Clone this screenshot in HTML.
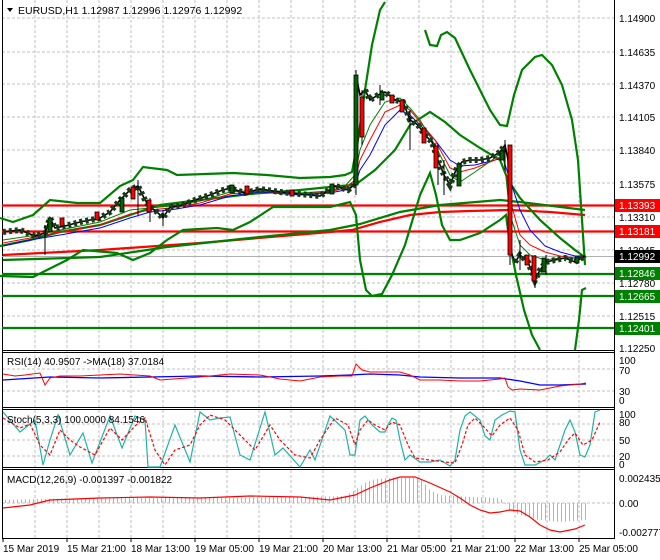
<!DOCTYPE html>
<html><head><meta charset="utf-8"><style>
html,body{margin:0;padding:0;background:#fff}
svg{display:block;font-family:"Liberation Sans",sans-serif;font-size:10px}
</style></head><body>
<svg width="660" height="560" viewBox="0 0 660 560" xmlns="http://www.w3.org/2000/svg">
<defs>
<pattern id="hist" width="4" height="10" patternUnits="userSpaceOnUse"><rect x="1" y="0" width="1" height="10" fill="#b4b4b4"/></pattern>
</defs>
<rect width="660" height="560" fill="#fff"/>
<g stroke="#c0c0c0" stroke-dasharray="3,2" stroke-width="1">
<path d="M35 0V538M67 0V538M99 0V538M131 0V538M163 0V538M195 0V538M227 0V538M259 0V538M291 0V538M323 0V538M355 0V538M387 0V538M419 0V538M451 0V538M483 0V538M515 0V538M547 0V538M579 0V538"/>
<path d="M2 18H614M2 52H614M2 84H614M2 117H614M2 150H614M2 183H614M2 217H614M2 250H614M2 283H614M2 316H614"/>
<path d="M2 369H614M2 391H614M2 424H614M2 440H614M2 456H614M2 503H614"/>
</g>
<g stroke="#000" stroke-width="1" fill="none">
<path d="M2.5 0V538.5H614.5V0"/>
<path d="M2 350.5H614M2 352.5H614M2 407.5H614M2 409.5H614M2 467.5H614M2 469.5H614"/>
</g>
<path d="M2 256.5H614" stroke="#b0b0b0"/>
<g stroke-width="2.2">
<path d="M2 205.5H614" stroke="#ff0000"/>
<path d="M2 231.5H614" stroke="#ff0000"/>
<path d="M2 274H614" stroke="#008000"/>
<path d="M2 296H614" stroke="#008000"/>
<path d="M2 328H614" stroke="#008000"/>
</g>
<polyline fill="none" stroke="#ff0000" stroke-width="2.2" points="3,255 100,250 200,243 330,232 352,230 380,222 410,215 440,212 470,211 510,210 550,212 585,215"/>
<polyline fill="none" stroke="#008000" stroke-width="2.2" points="3,260 100,257 167,247 250,238 330,230 360,224 400,212 440,205 500,200 520,202 585,210"/>
<g fill="none" stroke="#008000" stroke-width="2.2">
<polyline points="0,218 13,222 33,215 50,200 77,203 100,203 120,186 133,180 143,167 167,170 177,175 233,173 267,175 300,178 330,177 345,175 352,172 358,140 365,90 372,45 380,10 385,2"/>
<polyline points="425,30 430,45 437,46 441,35 447,32 455,38 470,70 490,110 500,125 507,126 514,95 522,70 535,57 542,55 552,65 562,85 572,120 578,160 582,220 585,265"/>
<polyline points="0,276 33,277 67,260 83,250 117,253 133,260 150,253 167,240 183,230 217,228 233,230 250,222 273,207 330,207 350,202 356,215 360,260 366,290 372,296 382,294 392,275 405,245 420,195 430,173 436,195 442,225 450,240 460,240 480,233 500,220 506,215 510,245 516,275 524,310 532,335 540,350"/>
<polyline points="575,350 579,320 582,290 586,288"/>
<polyline points="0,246 30,240 60,232 100,225 130,215 160,205 200,200 250,194 300,190 340,186 355,185 375,170 395,150 410,125 430,112 445,122 460,135 480,148 500,160 508,180 520,198 540,220 560,238 575,250 586,258"/>
</g>
<polyline fill="none" stroke="#0000ff" stroke-width="1" points="3,246 30,240 60,235 100,228 130,218 150,212 170,210 200,205 230,196 260,192 300,195 330,193 345,190 355,185 360,170 370,155 385,125 400,110 410,115 420,125 435,140 450,160 460,166 475,165 495,160 503,158 510,180 520,210 530,230 545,246 560,252 575,256 586,256"/>
<polyline fill="none" stroke="#ff0000" stroke-width="1" points="3,243 30,238 60,232 100,225 130,214 150,210 170,208 200,203 230,194 260,191 300,194 330,192 345,188 355,180 360,160 370,140 385,112 400,105 410,110 420,122 435,140 450,168 460,172 475,168 495,160 503,155 510,200 520,235 530,245 545,252 560,256 575,258 586,256"/>
<polyline fill="none" stroke="#008000" stroke-width="1" points="3,240 30,236 60,230 100,222 130,210 150,208 170,206 200,201 230,192 260,190 300,193 330,191 345,186 355,175 360,150 370,125 385,102 400,98 410,108 420,120 435,145 450,175 460,182 475,172 495,158 503,150 510,215 520,245 530,255 545,260 560,258 575,258 586,257"/>
<polyline fill="none" stroke="#000" stroke-width="1.6" points="3,232 20,230 35,236 45,233 50,218 55,228 65,226 80,222 100,218 110,212 120,200 130,190 138,186 145,200 150,207 157,212 163,218 170,207 180,206 195,200 210,195 220,191 230,188 245,193 260,189 280,192 300,194 320,196 335,186 348,190 354,185 356,75 360,95 365,90 370,100 378,95 385,92 395,100 403,102 410,120 418,125 425,135 432,142 438,160 444,175 450,185 456,170 462,162 470,160 480,160 490,158 500,152 505,145 508,160 510,250 515,262 520,255 528,262 535,280 540,270 546,262 555,260 565,258 575,262 585,256"/>
<polyline fill="none" stroke="#1a3a1a" stroke-width="6" stroke-dasharray="3,3" points="3,232 20,230 35,236 45,233 50,218 55,228 65,226 80,222 100,218 110,212 120,200 130,190 138,186 145,200 150,207 157,212 163,218 170,207 180,206 195,200 210,195 220,191 230,188 245,193 260,189 280,192 300,194 320,196 335,186 348,190 354,185"/>
<polyline fill="none" stroke="#1a3a1a" stroke-width="6" stroke-dasharray="3,3" points="365,90 370,100 378,95 385,92 395,100 403,102 410,120 418,125 425,135 432,142 438,160 444,175 450,185 456,170 462,162 470,160 480,160 490,158 500,152 505,145"/>
<polyline fill="none" stroke="#1a3a1a" stroke-width="6" stroke-dasharray="3,3" points="515,262 520,255 528,262 535,280 540,270 546,262 555,260 565,258 575,262 585,256"/>
<g stroke="#000" stroke-width="1">
<path d="M45 225V255M138 180V215M150 198V222M163 210V226M356 70V195M362 90V145M380 85V105M410 110V150M438 145V185M444 160V195M505 140V170M510 145V265M520 240V270M535 255V288M546 255V275"/>
</g>
<g fill="#ff0000" stroke="#000" stroke-width="0.8">
<rect x="131" y="187" width="4" height="12"/><rect x="147" y="200" width="4" height="12"/>
<rect x="360" y="97" width="4" height="40"/><rect x="422" y="128" width="4" height="15"/>
<rect x="434" y="146" width="4" height="22"/><rect x="508" y="145" width="4" height="110"/>
<rect x="532" y="256" width="4" height="25"/><rect x="245" y="186" width="4" height="8"/>
<rect x="60" y="218" width="4" height="8"/><rect x="400" y="100" width="4" height="12"/>
<rect x="95" y="212" width="4" height="8"/><rect x="290" y="190" width="4" height="6"/>
<rect x="390" y="95" width="4" height="8"/><rect x="525" y="255" width="4" height="10"/>
</g>
<g fill="#006400" stroke="#000" stroke-width="0.8">
<rect x="354" y="75" width="4" height="110"/><rect x="48" y="218" width="4" height="14"/>
<rect x="120" y="198" width="4" height="14"/><rect x="457" y="164" width="4" height="22"/>
<rect x="500" y="151" width="4" height="9"/><rect x="542" y="258" width="4" height="14"/>
<rect x="575" y="257" width="4" height="6"/><rect x="380" y="92" width="4" height="8"/>
<rect x="230" y="185" width="4" height="8"/><rect x="330" y="184" width="4" height="10"/>
</g>
<polyline fill="none" stroke="#0000ff" stroke-width="1.3" points="3,380 50,377 100,378 150,377 200,376 260,377 320,376 350,375 370,374 400,375 420,377 460,378 500,378 520,381 540,385 560,385 586,384"/>
<polyline fill="none" stroke="#ff0000" stroke-width="1" points="3,374 15,376 25,375 40,373 45,385 50,378 60,376 80,376 100,375 120,374 150,376 160,380 200,377 230,374 260,375 280,379 300,381 320,377 340,376 352,376 356,364 362,370 370,372 390,372 400,372 410,375 420,380 440,380 460,381 480,381 500,379 505,378 508,387 512,390 520,389 540,390 560,386 580,384 586,383"/>
<polyline fill="none" stroke="#20b2aa" stroke-width="1.2" points="3,412 20,432 35,420 43,465 50,440 58,415 70,455 83,433 92,463 110,416 122,448 135,416 145,420 148,467 160,467 175,425 190,462 200,412 210,420 220,418 230,417 240,455 250,460 265,412 275,455 283,448 300,467 310,450 315,460 330,416 345,430 350,455 355,455 360,420 365,416 372,425 380,432 385,432 388,425 392,418 396,420 400,440 405,460 410,455 420,462 430,462 440,460 450,466 455,460 460,430 465,416 470,412 480,420 485,436 490,440 495,420 502,415 510,411 515,412 520,450 525,465 535,465 545,460 550,455 555,460 560,445 565,430 570,420 575,432 580,455 585,457 590,445 595,412 600,410"/>
<polyline fill="none" stroke="#ff0000" stroke-width="1.2" stroke-dasharray="3,2" points="3,418 20,428 30,424 40,445 50,455 60,430 70,440 80,447 95,455 110,428 122,440 135,426 145,418 155,450 165,465 175,450 190,445 200,425 210,415 225,420 245,440 255,450 270,425 280,440 295,455 310,458 320,440 335,418 348,425 355,445 360,430 368,420 375,425 385,430 392,422 400,425 408,445 415,458 430,460 445,462 455,463 462,445 468,425 475,418 485,428 492,436 500,425 510,418 518,430 525,455 535,462 548,460 560,452 568,440 575,433 583,445 592,440 600,422"/>
<polygon fill="url(#hist)" points="2,503 2,500 40,499 100,498 200,498 300,497 345,496 355,490 365,483 375,479 390,478 420,478 430,490 440,495 470,497 500,498 505,503 508,509 520,515 540,520 560,522 586,520 586,503"/>
<polyline fill="none" stroke="#ff0000" stroke-width="1.2" points="3,508 30,505 50,500 100,498 150,497 200,498 250,496 300,497 330,500 355,495 370,488 390,480 400,477 415,477 430,483 450,492 460,498 470,505 480,510 490,513 500,512 510,510 520,511 530,517 540,525 550,530 560,532 575,529 585,525"/>
<path d="M7 8H13L10 12Z" fill="#000"/>
<text x="18" y="14" font-size="10.5">EURUSD,H1  1.12987 1.12996 1.12976 1.12992</text>
<text x="7" y="365">RSI(14) 40.9507  -&gt;MA(18) 37.0184</text>
<text x="7" y="423">Stoch(5,3,3) 100.0000 84.1546</text>
<text x="7" y="483">MACD(12,26,9) -0.001397 -0.001822</text>
<g font-size="10">
<text x="619" y="22">1.14900</text><text x="619" y="56">1.14635</text>
<text x="619" y="89">1.14370</text><text x="619" y="121">1.14105</text>
<text x="619" y="154">1.13840</text><text x="619" y="188">1.13575</text>
<text x="619" y="221">1.13310</text><text x="619" y="254">1.13045</text>
<text x="619" y="287">1.12780</text><text x="619" y="320">1.12515</text>
<text x="619" y="352">1.12250</text>
<rect x="615" y="199" width="45" height="13" fill="#ff0000"/><text x="619" y="209" fill="#fff">1.13393</text>
<rect x="615" y="225" width="45" height="13" fill="#ff0000"/><text x="619" y="235" fill="#fff">1.13181</text>
<rect x="615" y="250" width="45" height="13" fill="#000"/><text x="619" y="260" fill="#fff">1.12992</text>
<rect x="615" y="267" width="45" height="13" fill="#008000"/><text x="619" y="277" fill="#fff">1.12846</text>
<rect x="615" y="290" width="45" height="13" fill="#008000"/><text x="619" y="300" fill="#fff">1.12665</text>
<rect x="615" y="322" width="45" height="13" fill="#008000"/><text x="619" y="332" fill="#fff">1.12401</text>
<text x="619" y="364">100</text><text x="619" y="374">70</text><text x="619" y="395">30</text><text x="619" y="404">0</text>
<text x="619" y="418">100</text><text x="619" y="426">80</text><text x="619" y="444">50</text><text x="619" y="460">20</text><text x="619" y="468">0</text>
<text x="619" y="482">0.002435</text><text x="619" y="507">0.00</text><text x="619" y="536">-0.002777</text>
</g>
<g font-size="10">
<text x="3" y="552">15 Mar 2019</text><text x="67" y="552">15 Mar 21:00</text>
<text x="131" y="552">18 Mar 13:00</text><text x="195" y="552">19 Mar 05:00</text>
<text x="259" y="552">19 Mar 21:00</text><text x="323" y="552">20 Mar 13:00</text>
<text x="387" y="552">21 Mar 05:00</text><text x="451" y="552">21 Mar 21:00</text>
<text x="515" y="552">22 Mar 13:00</text><text x="579" y="552">25 Mar 05:00</text>
</g>
<g stroke="#000"><path d="M3 538V542M67 538V542M131 538V542M195 538V542M259 538V542M323 538V542M387 538V542M451 538V542M515 538V542M579 538V542"/></g>
</svg>
</body></html>
